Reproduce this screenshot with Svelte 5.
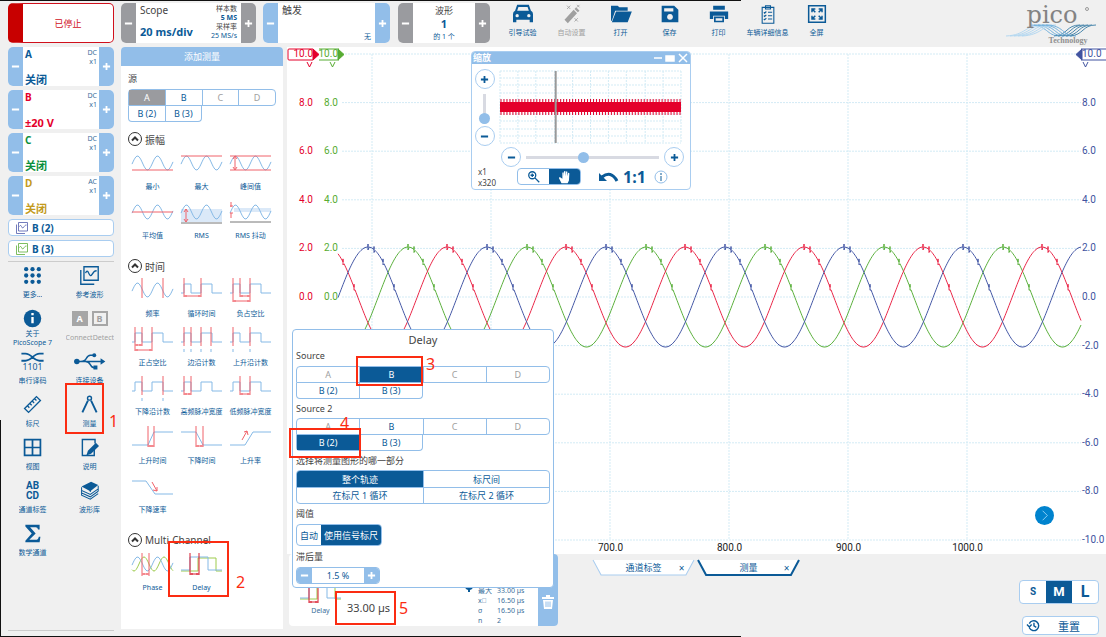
<script>
    const channels = [
        { name: 'A', range: '关闭', coupling: 'DC', color: 'blue' },
        { name: 'B', range: '±20 V', coupling: 'DC', color: 'red' },
        { name: 'C', range: '关闭', coupling: 'DC', color: 'green' },
        { name: 'D', range: '关闭', coupling: 'AC', color: 'gold' }
    ];

    const toolbar = [
        { id: 'car', label: '引导试验' },
        { id: 'wand', label: '自动设置', off: true },
        { id: 'folder', label: '打开' },
        { id: 'save', label: '保存' },
        { id: 'print', label: '打印' },
        { id: 'list', label: '车辆详细信息' },
        { id: 'full', label: '全屏' }
    ];

    const menu = [
        { id: 'more', label: '更多...' },
        { id: 'ref', label: '参考波形' },
        { id: 'info', label: '关于 PicoScope 7' },
        { id: 'detect', label: 'ConnectDetect', off: true },
        { id: 'serial', label: '串行译码' },
        { id: 'usb', label: '连接设备' },
        { id: 'ruler', label: '标尺' },
        { id: 'compass', label: '测量' },
        { id: 'view', label: '视图' },
        { id: 'notes', label: '说明' },
        { id: 'abcd', label: '通道标签' },
        { id: 'books', label: '波形库' },
        { id: 'sigma', label: '数学通道' }
    ];

    const sine = wave(5.5, 20, 7, 14, 41);
    const pulse = 'M0 17H3V8H10V17H20V8H31V17H41';

    const groups = [
        {
            title: '振幅',
            items: [
                { label: '最小', blue: sine, red: 'M0 21H41' },
                { label: '最大', blue: sine, red: 'M0 7H41' },
                { label: '峰间值', blue: sine, red: 'M0 7H41M0 21H41' + vArrow(5, 7, 21) },
                { label: '平均值', blue: sine, red: 'M0 14H41' },
                { label: 'RMS', blue: sine, fill: 'M0 11H41V24H0Z', gray: 'M0 25H41', red: vArrow(5, 11, 24) },
                { label: 'RMS 抖动', blue: sine, fill: 'M4 10H41V14H4Z', gray: 'M0 24H41', red: 'M1 4V9M0 8H3M1 20V15M0 15H3' }
            ]
        },
        {
            title: '时间',
            items: [
                { label: '频率', blue: sine, red: 'M10 2V22M31 2V22' },
                { label: '循环时间', blue: pulse, red: 'M3 2V21M20 2V21' + hArrow(3, 20, 20) },
                { label: '负占空比', blue: pulse, red: 'M3 2V26M10 2V21M20 2V26' + hArrow(10, 20, 20) + hArrow(3, 20, 25) },
                { label: '正占空比', blue: pulse, red: 'M3 2V26M10 2V21M20 2V26' + hArrow(3, 10, 20) + hArrow(3, 20, 25) },
                { label: '边沿计数', blue: pulse + 'M3 24V27M10 24V27M20 24V27M30 24V27', red: 'M3 2V21M10 2V21M20 2V21M30 2V21' },
                { label: '上升沿计数', blue: pulse + 'M3 24V27M20 24V27', red: 'M3 2V21M20 2V21' },
                { label: '下降沿计数', blue: pulse + 'M10 24V27M31 24V27', red: 'M10 2V21M31 2V21' },
                { label: '高频脉冲宽度', blue: pulse, red: 'M3 2V21M10 2V21' + hArrow(3, 10, 20) },
                { label: '低频脉冲宽度', blue: pulse, red: 'M10 2V21M20 2V21' + hArrow(10, 20, 20) },
                { label: '上升时间', blue: 'M0 22H16L22 9H41', red: 'M16 3V24M22 3V24' + hArrow(16, 22, 23) },
                { label: '下降时间', blue: 'M0 9H15L22 22H41', red: 'M15 3V24M22 3V24' + hArrow(15, 22, 23) },
                { label: '上升率', blue: 'M0 22H15L23 9H41', red: 'M12 17L17 8M14 9L17 8L18 12' },
                { label: '下降速率', blue: 'M0 9H14L23 22H41', red: 'M20 10L25 19M21 18L25 19L25 15' }
            ]
        },
        {
            title: 'Multi-Channel',
            items: [
                { label: 'Phase', blue: sine, green: wave(12, 20, 7, 14, 41), red: 'M10 3V26M17 3V26' + hArrow(10, 17, 24) },
                { label: 'Delay', blue: 'M0 20H9V7H27V20H41', green: 'M0 21H17V8H35V21H41', red: 'M9 3V25M18 3V25' + hArrow(9, 18, 24), strong: true }
            ]
        }
    ];

    const levels = [10, 8, 6, 4, 2, 0, -2, -4, -6, -8, -10];
    const times = ['', '', '700.0', '800.0', '900.0', '1000.0'];

    const traces = [
        { color: 'green', d: trace(70) },
        { color: 'red', d: trace(109) },
        { color: 'blue', d: trace(30) }
    ];

    let noise = '';
    for (let x = 1; x < 182; x += 3) {
        noise += 'M' + x + ' 28V44';
    }

    let source = $state('B');
    let source2 = $state('B (2)');
    let part = $state('整个轨迹');
    let size = $state('M');
    let zoomX = $state(43);
    let zoomY = $state(0);

    function wave(peak, period, amp, mid, width) {
        let d = '';
        for (let x = 0; x <= width; x++) {
            const y = mid - amp * Math.cos((2 * Math.PI * (x - peak)) / period);
            d += (x ? 'L' : 'M') + x + ' ' + y.toFixed(1);
        }
        return d;
    }

    // one phase of the signal, with the small spikes after each peak
    function trace(peak) {
        let d = '';
        for (let x = 0; x <= 743; x++) {
            const y = 243 - 50 * Math.cos((2 * Math.PI * (x - peak)) / 119);
            const k = (((x - peak) % 119) + 119) % 119;
            d += (x ? 'L' : 'M') + x + ' ' + y.toFixed(1);
            if (k == 0 || k == 6 || k == 15 || k == 26) {
                d += 'V' + (y - 3).toFixed(1) + 'V' + (y + 3).toFixed(1);
            }
        }
        return d;
    }

    function hArrow(a, b, y) {
        return `M${a} ${y}H${b}M${a + 2} ${y - 1}V${y + 1}M${b - 2} ${y - 1}V${y + 1}`;
    }

    function vArrow(x, a, b) {
        return `M${x} ${a}V${b}M${x - 2} ${a + 3}L${x} ${a}L${x + 2} ${a + 3}M${x - 2} ${b - 3}L${x} ${b}L${x + 2} ${b - 3}`;
    }
</script>

{#snippet icon(id)}
    <svg class="icon" viewBox="0 0 24 24" fill="currentColor" aria-hidden="true">
        {#if id == 'car'}
            <path d="M5 1h14l2.500 7q2.500 1 2.500 4v10h-4v-3H4v3H0V12q0-3 2.500-4zM6.500 3.500L5 8h14l-1.500-4.500z" />
            <circle cx="5" cy="14" r="2" fill="#f0f0f0" /><circle cx="19" cy="14" r="2" fill="#f0f0f0" />
        {:else if id == 'wand'}
            <path d="M3 19L14 7l4 4L7 23zM15 6l2-2 4 4-2 2z" />
            <path d="M6 2l4 4m0-4L6 6M15 17l4 4m0-4l-4 4M18 1l3 3m0-3l-3 3" stroke="currentColor" fill="none" />
        {:else if id == 'folder'}
            <path d="M0 2h8l2 2h10v4H5L1 20H0zM6 9h19L20 22H1z" />
        {:else if id == 'save'}
            <path fill-rule="evenodd" d="M2 2h15l5 5v15H2zM5 5v4h11V5zM12 12a3.500 3.500 0 1 0 .01 0z" />
        {:else if id == 'print'}
            <path fill-rule="evenodd" d="M5 2h14v5H5zM1 9h22v9h-4v-4H5v4H1zM6 15h12v7H6zM8 17v3h8v-3z" />
        {:else if id == 'list'}
            <path d="M5 4h14v19H5zM9 2h6v4H9zM7 10l1 1 2-2M12 10h5M7 14l1 1 2-2M12 14h5M7 18l1 1 2-2M12 18h5" fill="none" stroke="currentColor" stroke-width="1.300" />
        {:else if id == 'full'}
            <path d="M2 2h20v20H2zM6 10V6h4M6 6l4 4M18 10V6h-4M18 6l-4 4M6 14v4h4M6 18l4-4M18 14v4h-4M18 18l-4-4" fill="none" stroke="currentColor" stroke-width="1.800" />
        {:else if id == 'more'}
            {#each [4, 12, 20] as y}
                {#each [4, 12, 20] as x}<circle cx={x} cy={y} r="2.700" />{/each}
            {/each}
        {:else if id == 'ref'}
            <path d="M5 1h18v17H5zM1 5v18h17M7 9q2-5 4 0t4 2t3-4t3-1" fill="none" stroke="currentColor" stroke-width="1.700" />
        {:else if id == 'info'}
            <circle cx="12" cy="12" r="11" /><path d="M10.500 5h3v3h-3zM10.500 10h3v8h-3z" fill="#fff" />
        {:else if id == 'serial'}
            <path d="M-2 2h5q4 0 9 4.500t9 4.500h5M-2 11h5q4 0 9-4.500t9-4.500h5" fill="none" stroke="currentColor" stroke-width="2.400" />
            <text x="12" y="23" font-size="11" text-anchor="middle">1101</text>
        {:else if id == 'usb'}
            <path d="M-4 12h32M1 12q5 0 7-4t5-4h4M7 12q4 0 6 4t5 4h2" fill="none" stroke="currentColor" stroke-width="1.800" />
            <circle cx="-4" cy="12" r="3.500" /><circle cx="18" cy="4" r="2.500" /><path d="M17 17h5v5h-5zM26 8l6 4-6 4z" />
        {:else if id == 'ruler'}
            <path d="M2 17L17 2l5 5L7 22zM6 14l2 2M9 11l2 2M12 8l2 2M15 5l2 2" fill="none" stroke="currentColor" stroke-width="1.700" />
        {:else if id == 'compass'}
            <path d="M10 7L3 22M14 7l7 15" fill="none" stroke="currentColor" stroke-width="2.400" />
            <circle cx="12" cy="4" r="2.500" fill="none" stroke="currentColor" stroke-width="1.800" />
        {:else if id == 'view'}
            <path d="M2 2h20v20H2zM12 2v20M2 12h20" fill="none" stroke="currentColor" stroke-width="2.200" />
        {:else if id == 'notes'}
            <path d="M18 12v10H3V2h16v5" fill="none" stroke="currentColor" stroke-width="1.800" /><path d="M20 6l4 4L14 20l-6 2 2-6z" />
        {:else if id == 'books'}
            <path d="M2 7L14 1l9 4-10 8z" />
            <path d="M2 8v4l11 5 10-7M2 12v3l11 5 10-7M2 15v3l11 5 10-7M13 14V10M23 6v7" fill="none" stroke="currentColor" stroke-width="1.300" />
        {:else if id == 'sigma'}
            <path d="M3 1h18v6h-2q-.5-3-3-3H9l7 8-8 8h8q3 0 4-4h2l-1 7H3v-2l8-9-8-9z" />
        {/if}
    </svg>
{/snippet}

{#snippet plus()}
    <svg class="sign" viewBox="0 0 10 10"><path d="M1 5H9M5 1V9" /></svg>
{/snippet}
{#snippet minus()}
    <svg class="sign" viewBox="0 0 10 10"><path d="M1 5H9" /></svg>
{/snippet}

{#snippet shape(item)}
    <svg class="shape" viewBox="0 0 41 28" aria-hidden="true">
        {#if item.fill}<path d={item.fill} class="tint" />{/if}
        {#if item.gray}<path d={item.gray} class="base" />{/if}
        {#if item.green}<path d={item.green} class="alt" />{/if}
        <path d={item.blue} class="sig" />
        <path d={item.red} class="mark" class:strong={item.strong} />
    </svg>
{/snippet}

{#snippet sources(selected, pick)}
    <div class="sources">
        <div class="segs top">
            {#each ['A', 'B', 'C', 'D'] as s}
                <button class:on={selected == s} class:off={s != 'B'} onclick={() => pick(s)}>{s}</button>
            {/each}
        </div>
        <div class="segs under">
            {#each ['B (2)', 'B (3)'] as s}
                <button class:on={selected == s} onclick={() => pick(s)}>{s}</button>
            {/each}
        </div>
    </div>
{/snippet}

<div class="app">
    <header>
        <button class="stop">已停止</button>
        <div class="card scope gray">
            <button class="side" aria-label="减">{@render minus()}</button>
            <div class="mid">
                <div class="col"><span class="name">Scope</span><b class="big">20 ms/div</b></div>
                <div class="rates"><span>样本数</span><b>5 MS</b><span>采样率</span><i>25 MS/s</i></div>
            </div>
            <button class="side" aria-label="加">{@render plus()}</button>
        </div>
        <div class="card trigger">
            <button class="side" aria-label="减">{@render minus()}</button>
            <div class="mid"><span class="name">触发</span><span class="none">无</span></div>
            <button class="side" aria-label="加">{@render plus()}</button>
        </div>
        <div class="card buffer gray">
            <button class="side" aria-label="减">{@render minus()}</button>
            <div class="mid"><span class="name">波形</span><b>1</b><small>的 1 个</small></div>
            <button class="side" aria-label="加">{@render plus()}</button>
        </div>
        <nav class="toolbar">
            {#each toolbar as t}
                <button class:off={t.off}>{@render icon(t.id)}<span>{t.label}</span></button>
            {/each}
        </nav>
        <svg class="logo" viewBox="0 0 92 42" role="img" aria-label="pico Technology">
            {#each [0, 4, 8, 12, 16] as o}
                <path d="M{o} 33C{20 + o} 32 {20 + o} 22 {34 + o} 22" stroke="#b4d8f0" fill="none" />
                <path d="M{24 + o} 22C{42 + o} 22 {40 + o} 33 {54 + o} 33" stroke="#72b0dc" fill="none" />
                <path d="M{48 + o} 33C{62 + o} 32 {60 + o} 22 {74 + o} 22" stroke="#4b88ad" fill="none" />
            {/each}
            <text x="46" y="20" text-anchor="middle" class="pico">pico</text>
            <text x="62" y="40" text-anchor="middle" class="tech">Technology</text>
            <circle cx="81" cy="6" r="1.500" fill="none" stroke="#999" />
        </svg>
    </header>

    <div class="body">
        <aside class="sidebar">
            {#each channels as c}
                <div class="card channel">
                    <button class="side" aria-label="减">{@render minus()}</button>
                    <div class="mid">
                        <div class="col {c.color}"><b>{c.name}</b><b class="range">{c.range}</b></div>
                        <div class="coupling"><span>{c.coupling}</span><span>x1</span></div>
                    </div>
                    <button class="side" aria-label="加">{@render plus()}</button>
                </div>
            {/each}
            <button class="math violet">{@render icon('ref')}<b>B (2)</b></button>
            <button class="math lime">{@render icon('ref')}<b>B (3)</b></button>
            <hr />
            <div class="menu">
                {#each menu as m}
                    <button class:info={m.id == 'info'} class:off={m.off}>
                        {#if m.id == 'detect'}
                            <span class="ab"><b class="full">A</b><b>B</b></span>
                        {:else if m.id == 'abcd'}
                            <span class="abcd">AB<br />CD</span>
                        {:else}
                            {@render icon(m.id)}
                        {/if}
                        <span class="label">{m.label}</span>
                    </button>
                {/each}
            </div>
        </aside>

        <section class="panel">
            <h2>添加测量</h2>
            <div class="inner">
                <h3>源</h3>
                <div class="pick">{@render sources('A', () => {})}</div>
                {#each groups as g}
                    <button class="fold">
                        <svg viewBox="0 0 14 14"><circle cx="7" cy="7" r="6.500" /><path d="M4 8.500L7 5.500L10 8.500" /></svg>
                        {g.title}
                    </button>
                    <div class="items">
                        {#each g.items as item}
                            <button>{@render shape(item)}<span>{item.label}</span></button>
                        {/each}
                    </div>
                {/each}
            </div>
        </section>

        <main>
            <div class="chart">
                <div class="axis left red">
                    {#each levels as v}<span>{v >= 0 ? v.toFixed(1) : ''}</span>{/each}
                    <svg class="flag" viewBox="0 0 34 20"><path d="M26 1H2Q1 1 1 2V11Q1 12 2 12H26" /><path class="solid" d="M26 1L32 6.500L26 12Z" /><path d="M20 14L22.500 19L25 14" /></svg>
                </div>
                <div class="axis left green">
                    {#each levels as v}<span>{v >= 0 ? v.toFixed(1) : ''}</span>{/each}
                    <svg class="flag" viewBox="0 0 34 20"><path d="M6 1H26M6 12H26" /><path class="solid" d="M25 1L31 6.500L25 12Z" /><path d="M17 14L19.500 19L22 14" /></svg>
                </div>
                <svg class="plot" viewBox="0 0 743 486" preserveAspectRatio="none">
                    {#each levels as v, i}<path class="grid" d="M4 {i * 48.6}H743" />{/each}
                    {#each times as t, i}<path class="grid" d="M{34 + i * 119} 0V486" />{/each}
                    {#each traces as t}<path class="trace {t.color}" d={t.d} />{/each}
                </svg>
                <div class="axis right navy">
                    {#each levels as v}<span>{v.toFixed(1)}</span>{/each}
                    <svg class="flag" viewBox="0 0 34 20"><path d="M6 1H31M6 12H31" /><path class="solid" d="M7 1L1 6.500L7 12Z" /><path d="M8 14L10.500 19L13 14" /></svg>
                </div>
                <div class="times">
                    {#each times as t}<span>{t}</span>{/each}
                </div>
                <button class="next" aria-label="下一个"><svg viewBox="0 0 20 20"><path d="M8 5L13 10L8 15" /></svg></button>
            </div>

            <div class="bottom">
                <div class="result">
                    <div class="kind">{@render shape(groups[2].items[1])}<span>Delay</span></div>
                    <span class="value">33.00 µs</span>
                    <svg class="gear" viewBox="0 0 12 12"><circle cx="6" cy="6" r="4" /><path d="M5 0h2v12H5zM0 5h12v2H0z" /></svg>
                    <table>
                        <tbody>
                            <tr><th>最大</th><td>33.00 µs</td></tr>
                            <tr><th>x&#x2395;</th><td>16.50 µs</td></tr>
                            <tr><th>σ</th><td>16.50 µs</td></tr>
                            <tr><th>n</th><td>2</td></tr>
                        </tbody>
                    </table>
                    <button class="trash" aria-label="删除"><svg viewBox="0 0 12 14"><path d="M0 2H4V0H8V2H12V4H0ZM1 5H11L10 14H2Z" /><path d="M4 6.500V12M6 6.500V12M8 6.500V12" stroke="#92bee9" /></svg></button>
                </div>
                <div class="tabs">
                    <div class="tab">
                        <svg viewBox="0 0 102 16" preserveAspectRatio="none"><path d="M1 0L9 15H93L101 0" /></svg>
                        <button>通道标签</button><button class="close" aria-label="关闭">×</button>
                    </div>
                    <div class="tab active">
                        <svg viewBox="0 0 102 16" preserveAspectRatio="none"><path d="M1 0L9 15H93L101 0" /></svg>
                        <button>测量</button><button class="close" aria-label="关闭">×</button>
                    </div>
                </div>
                <div class="corner">
                    <div class="sizes">
                        {#each ['S', 'M', 'L'] as s}
                            <button class="size{s}" class:on={size == s} onclick={() => (size = s)}>{s}</button>
                        {/each}
                    </div>
                    <button class="reset">
                        <svg viewBox="0 0 14 14"><path d="M2.500 5A5.300 5.300 0 1 1 2.500 9.500M0 6L2.500 8.500L5 6M7.500 4V7.500L10 9" /></svg>
                        <span>重置</span>
                    </button>
                </div>
            </div>

            <section class="zoom">
                <div class="bar"><b>缩放</b><svg viewBox="0 0 36 10"><path d="M1 5H9" /><path class="box" d="M13 3H21V8H13Z" /><path d="M26 1L34 9M34 1L26 9" /></svg></div>
                <div class="view">
                    <div class="vert">
                        <button class="round" aria-label="放大">{@render plus()}</button>
                        <input type="range" aria-label="垂直缩放" bind:value={zoomY} />
                        <button class="round" aria-label="缩小">{@render minus()}</button>
                    </div>
                    <svg class="mini" viewBox="0 0 182 72" preserveAspectRatio="none">
                        {#each [0, 7, 14, 22, 29, 36, 43, 50, 58, 65, 72] as y}<path class="grid" d="M0 {y}H182" />{/each}
                        {#each [0, 18, 36, 55, 73, 91, 109, 127, 146, 164, 182] as x}<path class="grid" d="M{x} 0V72" />{/each}
                        <path class="noise" d={noise} /><path class="band" d="M0 31H182V41H0Z" />
                        <path class="cursor" d="M56 0V72" />
                    </svg>
                </div>
                <div class="horiz">
                    <button class="round" aria-label="缩小">{@render minus()}</button>
                    <input type="range" aria-label="水平缩放" bind:value={zoomX} />
                    <button class="round" aria-label="放大">{@render plus()}</button>
                </div>
                <div class="tools">
                    <div class="factors"><span>x1</span><span>x320</span></div>
                    <div class="modes">
                        <button aria-label="框选缩放"><svg viewBox="0 0 16 16"><circle cx="6" cy="6" r="4" /><path d="M9 9L14 14M4 6H8M6 4V8" /></svg></button>
                        <button class="on" aria-label="平移"><svg viewBox="0 0 16 16"><path class="hand" d="M4 15L1 9l1-1 3 2V3q1-1 1.500 0v4l.5-5.500q1-1 1.500 0V7l.7-5q1-1 1.500 0L10.500 7l1-3.500q1-.7 1.500.5L12.500 12l-1.500 3z" /></svg></button>
                    </div>
                    <button class="undo" aria-label="撤销"><svg viewBox="0 0 20 14"><path d="M3 7Q12 0 18 11" /><path class="tip" d="M0 3V11H8Z" /></svg></button>
                    <button class="one">1:1</button>
                    <button class="about" aria-label="信息"><svg viewBox="0 0 14 14"><circle cx="7" cy="7" r="6" /><path d="M7 6V11M7 3V5" /></svg></button>
                </div>
            </section>

            <section class="popup">
                <h2>Delay</h2>
                <h3>Source</h3>
                {@render sources(source, (s) => (source = s))}
                <h3>Source 2</h3>
                {@render sources(source2, (s) => (source2 = s))}
                <h3>选择将测量图形的哪一部分</h3>
                <div class="parts">
                    {#each ['整个轨迹', '标尺间', '在标尺 1 循环', '在标尺 2 循环'] as p}
                        <button class:on={part == p} onclick={() => (part = p)}>{p}</button>
                    {/each}
                </div>
                <h3>阈值</h3>
                <div class="limit"><button>自动</button><button class="on">使用信号标尺</button></div>
                <h3>滞后量</h3>
                <div class="stepper">
                    <button aria-label="减">{@render minus()}</button>
                    <span>1.5 %</span>
                    <button aria-label="加">{@render plus()}</button>
                </div>
            </section>
        </main>
    </div>

    <!-- numbered steps drawn over the screen -->
    <div class="step s1"></div><span class="num n1">1</span>
    <div class="step s2"></div><span class="num n2">2</span>
    <div class="step s3"></div><span class="num n3">3</span>
    <div class="step s4"></div><span class="num n4">4</span>
    <div class="step s5"></div><span class="num n5">5</span>
</div>

<style>
    :global(body) {
        background: #f0f0f0;
    }
    .app {
        position: relative;
        box-sizing: border-box;
        min-height: 100vh;
        padding: 3px 0 0 8px;
        font-family: "Noto Sans", "Noto Sans CJK SC", sans-serif;
        font-size: 10px;
        color: #444;
        background:
            linear-gradient(#111, #111) 0 0 / 67% 1px no-repeat,
            linear-gradient(#111, #111) 0 100% / 67% 1px no-repeat,
            linear-gradient(#111, #111) 0 100% / 1px 34% no-repeat,
            #f0f0f0;
    }
    .app * {
        box-sizing: border-box;
    }
    button {
        font: inherit;
        color: #0b5a97;
        background: none;
        border: 0;
        padding: 0;
        margin: 0;
        cursor: pointer;
    }
    h2, h3 {
        margin: 0;
        font-weight: 400;
    }
    svg {
        display: block;
        overflow: visible;
    }
    .icon {
        width: 20px;
        height: 20px;
    }
    .sign {
        width: 9px;
        height: 9px;
        stroke: currentColor;
        stroke-width: 2;
    }

    header {
        display: flex;
        height: 40px;
    }
    .stop {
        width: 106px;
        margin-right: 7px;
        color: #d0101c;
        background: #fff;
        border: 1px solid #d0101c;
        border-left: 15px solid #c80000;
        border-radius: 5px;
        font-size: 9px;
    }
    .card {
        display: flex;
        background: #fff;
        border-radius: 5px;
        overflow: hidden;
    }
    .side {
        flex: none;
        width: 15px;
        display: grid;
        place-items: center;
        color: #fff;
        background: #92bee9;
    }
    .gray .side {
        background: #9a9b9f;
    }
    .mid {
        flex: 1;
        min-width: 0;
        display: flex;
        justify-content: space-between;
    }
    .col {
        display: flex;
        flex-direction: column;
        justify-content: space-between;
    }
    .scope {
        width: 135px;
        margin-right: 7px;
    }
    .scope .mid {
        padding: 0 4px;
    }
    .name {
        line-height: 14px;
    }
    .big {
        color: #0b5a97;
        font-size: 11px;
        line-height: 22px;
        white-space: nowrap;
    }
    .rates {
        display: flex;
        flex-direction: column;
        align-items: flex-end;
        padding-top: 1px;
        font-size: 7px;
        line-height: 9px;
        white-space: nowrap;
    }
    .rates b, .rates i {
        color: #0b5a97;
        font-style: normal;
    }
    .trigger {
        width: 127px;
        margin-right: 8px;
    }
    .trigger .mid {
        padding: 0 4px;
    }
    .none {
        align-self: flex-end;
        color: #0b5a97;
        font-size: 7px;
        line-height: 12px;
    }
    .buffer {
        width: 92px;
        margin-right: 8px;
    }
    .buffer .mid {
        flex-direction: column;
        align-items: center;
        padding: 2px 0 0;
        line-height: 12px;
        color: #0b5a97;
    }
    .buffer b {
        font-size: 11px;
    }
    .buffer .name {
        font-size: 9px;
        line-height: 12px;
        color: #444;
    }
    .buffer small {
        font-size: 7px;
    }
    .toolbar {
        display: flex;
    }
    .toolbar button {
        width: 49px;
        display: flex;
        flex-direction: column;
        align-items: center;
        gap: 4px;
        padding-top: 1px;
        font-size: 7px;
        line-height: 10px;
        white-space: nowrap;
    }
    .off, .toolbar .off {
        color: #a0a0a0;
    }
    .logo {
        width: 92px;
        height: 42px;
        margin: 0 8px 0 auto;
    }
    .pico {
        font: 24px "DejaVu Serif", serif;
        fill: #838383;
    }
    .tech {
        font: bold 8px "Liberation Serif", serif;
        fill: #8f8f8f;
    }

    .body {
        display: grid;
        grid-template-columns: 106px 162px minmax(0, 1fr);
        column-gap: 7px;
        padding-top: 4px;
    }
    .sidebar {
        display: flex;
        flex-direction: column;
        gap: 4px;
        border-bottom: 1px solid #ccc;
        margin-bottom: 4px;
    }
    .channel {
        height: 39px;
    }
    .channel .mid {
        padding: 0 2px;
    }
    .channel .col {
        line-height: 14px;
    }
    .channel .range {
        font-size: 11px;
        line-height: 13px;
        white-space: nowrap;
    }
    .coupling {
        display: flex;
        flex-direction: column;
        align-items: flex-end;
        padding-top: 1px;
        font-size: 7px;
        line-height: 9px;
        color: #3b6f9b;
    }
    .col.blue { color: #0b5a97; }
    .col.red { color: #e4002b; }
    .col.green { color: #0a8f3c; }
    .col.gold { color: #c39a1c; }
    .math {
        display: flex;
        align-items: center;
        gap: 4px;
        height: 17px;
        padding-left: 7px;
        background: #fff;
        border: 1px solid #a9cdf0;
        border-radius: 4px;
    }
    .math .icon {
        width: 12px;
        height: 12px;
    }
    .math b {
        color: #0b5a97;
    }
    .violet { color: #5a64b0; }
    .lime { color: #66b245; }
    hr {
        width: 100%;
        margin: 0;
        border: 0;
        border-top: 1px solid #ccc;
    }
    .menu {
        display: grid;
        grid-template-columns: 1fr 1fr;
        grid-auto-rows: 43px;
        margin: 0 -4px;
    }
    .menu button {
        min-width: 0;
        display: flex;
        flex-direction: column;
        align-items: center;
        gap: 5px;
        font-size: 7px;
        line-height: 10px;
    }
    .menu .icon {
        flex: none;
        width: 19px;
        height: 19px;
    }
    .menu .info {
        gap: 1px;
        line-height: 9px;
    }
    .menu .label {
        max-width: 48px;
        overflow: hidden;
    }
    .ab {
        display: flex;
        gap: 4px;
        padding: 2px 0;
    }
    .ab b {
        width: 16px;
        height: 15px;
        border: 2px solid #a6a6a6;
        font-size: 9px;
        line-height: 11px;
    }
    .ab .full {
        color: #fff;
        background: #a6a6a6;
    }
    .abcd {
        height: 19px;
        font: 700 10px Roboto, sans-serif;
        line-height: 10px;
    }

    .panel {
        margin-bottom: 6px;
        background: #fff;
        border-radius: 4px 4px 0 0;
    }
    .panel h2 {
        height: 19px;
        line-height: 19px;
        text-align: center;
        font-size: 9px;
        color: #fff;
        background: #92bee9;
        border-radius: 4px 4px 0 0;
    }
    .inner {
        padding: 5px 7px;
    }
    .inner h3 {
        line-height: 16px;
        margin-bottom: 2px;
        font-size: 9px;
    }
    .pick {
        margin-bottom: 10px;
    }
    .segs {
        display: flex;
        border: 1px solid #92bee9;
    }
    .segs button {
        flex: 1;
        height: 15px;
        font-size: 9px;
        line-height: 15px;
    }
    .segs button + button {
        border-left: 1px solid #92bee9;
    }
    .segs.top {
        border-radius: 4px 4px 4px 0;
    }
    .segs.under {
        width: 50%;
        border-top: 0;
        border-radius: 0 0 4px 4px;
    }
    .segs .on, .parts .on, .limit .on, .sizes .on {
        color: #fff;
        background: #0b5a97;
    }
    .segs .off:not(.on) {
        color: #a0a0a0;
    }
    .pick .segs .on {
        background: #9a9b9f;
    }
    .fold {
        display: flex;
        align-items: center;
        gap: 3px;
        height: 14px;
        margin-bottom: 3px;
        color: #444;
    }
    .fold svg {
        width: 14px;
        height: 14px;
        fill: none;
        stroke: #333;
    }
    .fold path {
        stroke-width: 2;
    }
    .items {
        display: grid;
        grid-template-columns: repeat(3, 49px);
        row-gap: 6px;
        margin-bottom: 18px;
    }
    .items button {
        display: flex;
        flex-direction: column;
        align-items: center;
        gap: 5px;
        font-size: 7px;
        line-height: 10px;
        white-space: nowrap;
    }
    .shape {
        width: 41px;
        height: 28px;
        fill: none;
    }
    .sig { stroke: #85b9e6; }
    .alt { stroke: #9dcb4c; }
    .mark { stroke: #f0626a; }
    .mark.strong { stroke: #d8182b; }
    .base { stroke: #777; }
    .tint { fill: #dbe9f8; }

    main {
        position: relative;
        display: flex;
        flex-direction: column;
        margin-left: -3px;
    }
    .chart {
        position: relative;
        display: grid;
        grid-template-columns: 26px 25px minmax(0, 1fr) 25px;
        grid-template-rows: 486px 14px;
        padding: 7px 0 0;
        background: #fff;
        font-family: Roboto, sans-serif;
        font-size: 10px;
    }
    .axis {
        position: relative;
        display: flex;
        flex-direction: column;
        justify-content: space-between;
        margin: -6px 0;
        line-height: 12px;
    }
    .axis span {
        height: 12px;
    }
    .axis.left {
        text-align: right;
    }
    .axis.right {
        padding-left: 1px;
    }
    .axis.red { color: #e4002b; }
    .axis.green { color: #57ac32; }
    .axis.navy { color: #4153a0; }
    .flag {
        position: absolute;
        top: 0;
        left: 0;
        width: 34px;
        height: 20px;
        fill: none;
        stroke: currentColor;
        stroke-width: 1;
    }
    .right .flag {
        left: -6px;
    }
    .flag .solid {
        fill: currentColor;
    }
    .plot {
        width: 100%;
        height: 100%;
    }
    .grid {
        fill: none;
        stroke: #d3ebf5;
        stroke-dasharray: 2 1;
        vector-effect: non-scaling-stroke;
    }
    .trace {
        fill: none;
        vector-effect: non-scaling-stroke;
    }
    .trace.red { stroke: #ea2748; }
    .trace.green { stroke: #5bb03c; }
    .trace.blue { stroke: #4558a6; }
    .times {
        grid-column: 3;
        display: grid;
        grid-template-columns: repeat(6, 1fr);
        margin: 0 54px 0 -25px;
        padding-top: 2px;
        text-align: center;
        line-height: 12px;
        color: #222;
    }
    .next {
        position: absolute;
        right: 52px;
        bottom: 29px;
        width: 19px;
        height: 19px;
        border-radius: 50%;
        background: #0083ce;
    }
    .next svg {
        fill: none;
        stroke: #8fd0f5;
    }

    .bottom {
        flex: 1;
        display: flex;
        align-items: flex-start;
        padding-left: 2px;
    }
    .result {
        flex: none;
        display: flex;
        align-items: flex-end;
        width: 269px;
        height: 72px;
        background: #fff;
        border-radius: 4px;
        overflow: hidden;
    }
    .kind {
        width: 58px;
        padding: 0 6px 10px 11px;
        font-size: 7px;
        line-height: 10px;
        color: #3b6f9b;
    }
    .kind span {
        display: block;
        text-align: center;
    }
    .value {
        width: 116px;
        font-size: 11px;
        line-height: 36px;
    }
    .gear {
        width: 12px;
        height: 12px;
        margin-bottom: 34px;
        fill: #0b5a97;
    }
    table {
        margin-left: 3px;
        border-collapse: collapse;
        font-size: 7px;
        line-height: 10px;
        color: #3b6f9b;
    }
    th, td {
        padding: 0;
        font-weight: 400;
        text-align: left;
        white-space: nowrap;
    }
    th {
        width: 19px;
    }
    .trash {
        width: 20px;
        height: 72px;
        margin-left: auto;
        padding: 41px 4px 17px;
        background: #92bee9;
    }
    .trash svg {
        width: 12px;
        height: 14px;
        fill: #fff;
    }
    .tabs {
        display: flex;
        gap: 2px;
        margin: 6px 0 0 34px;
    }
    .tab {
        display: grid;
        grid-template-columns: 1fr 20px;
        width: 103px;
        height: 16px;
    }
    .tab svg {
        grid-area: 1 / 1 / 2 / 3;
        width: 100%;
        height: 16px;
        fill: #fff;
        stroke: #a9cdf0;
        stroke-width: 1;
    }
    .tab.active svg {
        stroke: #0b5a97;
        stroke-width: 2;
    }
    .tab button {
        grid-area: 1 / 1;
        z-index: 1;
        padding-left: 20px;
        font-size: 9px;
        line-height: 14px;
    }
    .tab .close {
        grid-area: 1 / 2;
        padding: 0 7px 0 0;
        font-size: 10px;
    }
    .corner {
        display: flex;
        flex-direction: column;
        align-items: flex-end;
        gap: 12px;
        margin: 26px 7px 0 auto;
    }
    .sizes {
        display: flex;
        border: 1px solid #a9cdf0;
        border-radius: 4px;
        overflow: hidden;
        background: #fff;
        font-family: Roboto, sans-serif;
        font-weight: 700;
    }
    .sizes button {
        width: 26px;
        height: 22px;
        line-height: 22px;
    }
    .sizes .sizeS { font-size: 10px; }
    .sizes .sizeM { font-size: 13px; }
    .sizes .sizeL { font-size: 16px; }
    .reset {
        display: flex;
        align-items: center;
        width: 77px;
        height: 19px;
        padding-left: 4px;
        background: #fff;
        border: 1px solid #a9cdf0;
        border-radius: 4px;
    }
    .reset svg {
        width: 13px;
        height: 13px;
        fill: none;
        stroke: #0b5a97;
        stroke-width: 1.5;
    }
    .reset span {
        flex: 1;
        font-size: 11px;
    }

    .zoom {
        position: absolute;
        left: 184px;
        top: 4px;
        width: 220px;
        padding-bottom: 3px;
        background: #fff;
        border: 1px solid #a9cdf0;
        border-radius: 4px;
        overflow: hidden;
    }
    .bar {
        display: flex;
        align-items: center;
        justify-content: space-between;
        height: 12px;
        padding: 0 1px;
        color: #fff;
        background: #92bee9;
        font-size: 9px;
        line-height: 12px;
    }
    .bar svg {
        width: 36px;
        height: 10px;
        stroke: #fff;
        stroke-width: 1.5;
    }
    .bar .box {
        fill: #fff;
    }
    .view {
        display: flex;
        gap: 5px;
        padding: 5px 9px 0 2px;
    }
    .vert {
        display: flex;
        flex-direction: column;
        align-items: center;
        height: 77px;
    }
    .round {
        flex: none;
        width: 20px;
        height: 20px;
        display: grid;
        place-items: center;
        background: #fff;
        border: 1px solid #a9cdf0;
        border-radius: 50%;
    }
    input[type="range"] {
        appearance: none;
        flex: 1;
        min-width: 0;
        min-height: 0;
        margin: 5px;
        background: none;
    }
    .vert input {
        writing-mode: vertical-lr;
        direction: rtl;
        width: 11px;
        margin-bottom: 2px;
    }
    .horiz input {
        height: 11px;
        margin: 0 5px;
    }
    input::-webkit-slider-runnable-track {
        background: linear-gradient(#d8dae2, #d8dae2) center / 100% 3px no-repeat;
    }
    .vert input::-webkit-slider-runnable-track {
        background: linear-gradient(#d8dae2, #d8dae2) center / 3px 100% no-repeat;
    }
    input::-webkit-slider-thumb {
        appearance: none;
        width: 11px;
        height: 11px;
        border-radius: 50%;
        background: #92bee9;
    }
    .mini {
        flex: 1;
        min-width: 0;
        height: 72px;
        margin-top: 2px;
    }
    .noise {
        fill: none;
        stroke: #e4002b;
    }
    .band {
        fill: #e4002b;
    }
    .cursor {
        stroke: #999;
        stroke-width: 2;
    }
    .horiz {
        display: flex;
        align-items: center;
        margin: 1px 6px 0 29px;
    }
    .tools {
        display: flex;
        align-items: center;
        height: 19px;
        padding-left: 6px;
    }
    .factors {
        width: 39px;
        font-size: 8px;
        line-height: 11px;
    }
    .factors span {
        display: block;
    }
    .modes {
        display: flex;
        border: 1px solid #92bee9;
        border-radius: 4px;
        overflow: hidden;
    }
    .modes button {
        display: grid;
        place-items: center;
        width: 31px;
        height: 15px;
    }
    .modes svg {
        width: 14px;
        height: 14px;
        fill: none;
        stroke: currentColor;
        stroke-width: 1.5;
    }
    .modes .on {
        color: #fff;
        background: #0b5a97;
    }
    .modes .hand {
        fill: #fff;
        stroke: none;
    }
    .undo {
        margin: 0 4px 0 18px;
    }
    .undo svg {
        width: 20px;
        height: 14px;
        fill: none;
        stroke: #0b5a97;
        stroke-width: 3;
    }
    .undo .tip {
        fill: #0b5a97;
        stroke: none;
    }
    .one {
        font-size: 16px;
        font-weight: 700;
        line-height: 20px;
    }
    .about {
        margin-left: 8px;
    }
    .about svg {
        width: 14px;
        height: 14px;
        fill: none;
        stroke: #0b5a97;
    }
    .about circle {
        stroke: #92bee9;
    }

    .popup {
        position: absolute;
        left: 5px;
        top: 282px;
        width: 262px;
        padding: 2px 3px 3px;
        background: #fff;
        border: 1px solid #92bee9;
        border-radius: 4px;
    }
    .popup h2 {
        font-size: 11px;
        line-height: 16px;
        text-align: center;
    }
    .popup h3 {
        font-size: 9px;
        line-height: 16px;
        padding: 2px 0 1px;
    }
    .popup h2 + h3 {
        padding: 0 0 2px;
    }
    .parts {
        display: grid;
        grid-template-columns: 1fr 1fr;
        border: 1px solid #92bee9;
        border-radius: 4px;
        overflow: hidden;
    }
    .parts button {
        height: 16px;
        font-size: 9px;
        line-height: 15px;
    }
    .parts button:nth-child(n + 3) {
        border-top: 1px solid #92bee9;
    }
    .parts button:nth-child(2n) {
        border-left: 1px solid #92bee9;
    }
    .limit {
        display: flex;
        width: fit-content;
        height: 22px;
        margin: 1px 0;
        border: 1px solid #92bee9;
        border-radius: 4px;
        overflow: hidden;
        font-size: 9px;
    }
    .limit button {
        padding: 0 3px;
    }
    .stepper {
        display: flex;
        width: 84px;
        height: 17px;
        margin-top: 1px;
        border: 1px solid #92bee9;
        border-radius: 4px;
        overflow: hidden;
    }
    .stepper button {
        width: 15px;
        display: grid;
        place-items: center;
        color: #fff;
        background: #92bee9;
    }
    .stepper span {
        flex: 1;
        text-align: center;
        font-size: 9px;
        line-height: 15px;
        color: #0b5a97;
    }

    .step {
        position: absolute;
        border: 2px solid #fb2c12;
        pointer-events: none;
    }
    .num {
        position: absolute;
        color: #fb2c12;
        font-size: 16px;
        line-height: 16px;
    }
    .s1 { left: 65px; top: 383px; width: 39px; height: 51px; }
    .s2 { left: 168px; top: 541px; width: 61px; height: 56px; }
    .s3 { left: 356px; top: 356px; width: 67px; height: 30px; }
    .s4 { left: 289px; top: 428px; width: 72px; height: 30px; }
    .s5 { left: 335px; top: 591px; width: 61px; height: 34px; }
    .n1 { left: 109px; top: 413px; }
    .n2 { left: 236px; top: 574px; }
    .n3 { left: 426px; top: 356px; }
    .n4 { left: 340px; top: 415px; }
    .n5 { left: 399px; top: 600px; }
</style>
